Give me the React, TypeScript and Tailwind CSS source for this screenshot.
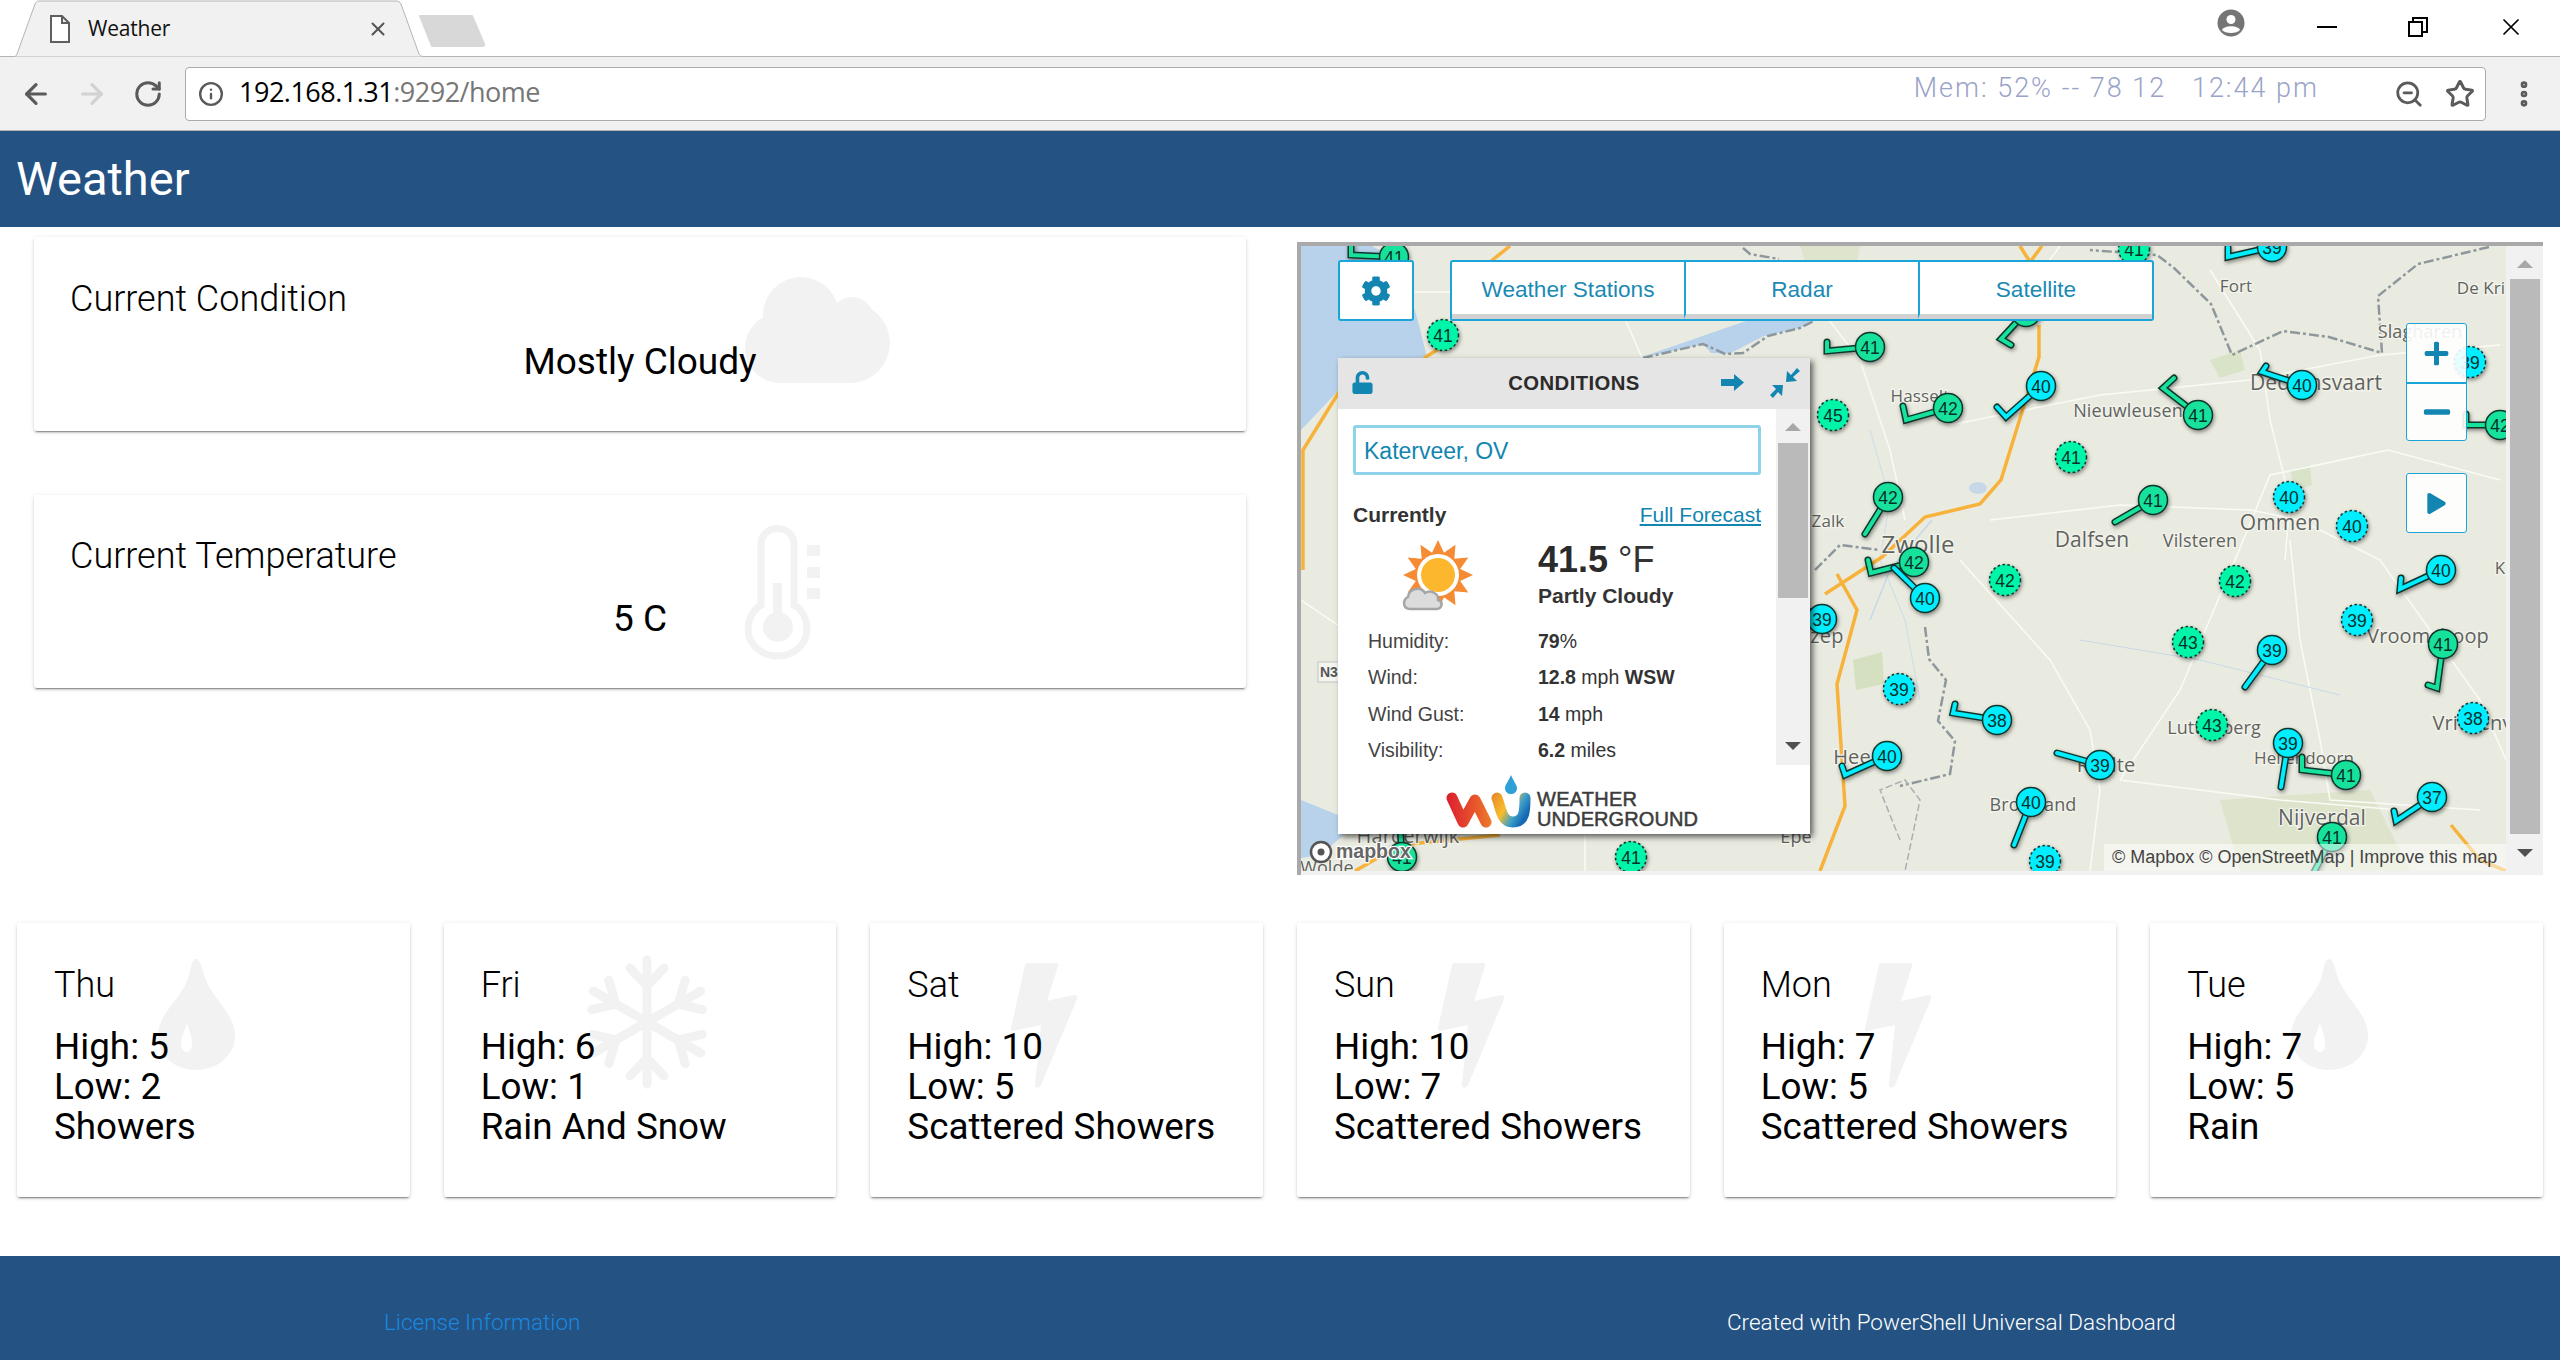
import {
  ArrowLeft,
  ArrowRight,
  Info,
  MoreVertical,
  RotateCw,
  Star,
  X,
  ZoomOut,
} from 'lucide-react'
import { FaCog, FaMinus, FaPlay, FaPlus, FaUnlock } from 'react-icons/fa'

// Station markers in page coordinates: [value, x, y, tail points]
type Marker = { v: number; x: number; y: number; tail?: number[][] }

const MARKERS: Marker[] = [
  { v: 41, x: 1394, y: 257, tail: [[1351, 255], [1351, 246]] },
  { v: 41, x: 1443, y: 335 },
  { v: 41, x: 1870, y: 347, tail: [[1827, 351], [1827, 342]] },
  { v: 45, x: 1833, y: 415 },
  { v: 42, x: 1888, y: 497, tail: [[1865, 534]] },
  { v: 39, x: 1822, y: 619, tail: [[1790, 600]] },
  { v: 39, x: 1899, y: 689 },
  { v: 40, x: 1887, y: 756, tail: [[1845, 775], [1842, 766]] },
  { v: 41, x: 1631, y: 857 },
  { v: 41, x: 1402, y: 857, tail: [[1400, 825]] },
  { v: 42, x: 1914, y: 562, tail: [[1871, 573], [1868, 560]] },
  { v: 40, x: 1925, y: 598, tail: [[1894, 568]] },
  { v: 40, x: 2041, y: 386, tail: [[2006, 417], [1997, 407]] },
  { v: 42, x: 1948, y: 408, tail: [[1906, 420], [1903, 406]] },
  { v: 41, x: 2198, y: 415, tail: [[2163, 388], [2174, 378]] },
  { v: 41, x: 2071, y: 457 },
  { v: 40, x: 2302, y: 385, tail: [[2262, 372], [2266, 366]] },
  { v: 39, x: 2470, y: 362 },
  { v: 42, x: 2500, y: 425, tail: [[2466, 425], [2466, 414]] },
  { v: 41, x: 2153, y: 500, tail: [[2115, 522]] },
  { v: 40, x: 2289, y: 497 },
  { v: 40, x: 2352, y: 526 },
  { v: 40, x: 2441, y: 570, tail: [[2400, 589], [2401, 578]] },
  { v: 42, x: 2005, y: 580 },
  { v: 42, x: 2235, y: 581 },
  { v: 39, x: 2357, y: 620 },
  { v: 43, x: 2188, y: 642 },
  { v: 39, x: 2272, y: 650, tail: [[2245, 687]] },
  { v: 41, x: 2443, y: 644, tail: [[2437, 688], [2428, 685]] },
  { v: 38, x: 2473, y: 718 },
  { v: 38, x: 1997, y: 720, tail: [[1953, 713], [1955, 704]] },
  { v: 43, x: 2212, y: 725 },
  { v: 39, x: 2100, y: 765, tail: [[2057, 753]] },
  { v: 39, x: 2288, y: 743, tail: [[2281, 787]] },
  { v: 41, x: 2346, y: 775, tail: [[2302, 770], [2302, 757]] },
  { v: 37, x: 2432, y: 797, tail: [[2396, 821], [2394, 811]] },
  { v: 40, x: 2031, y: 802, tail: [[2014, 845]] },
  { v: 39, x: 2045, y: 861 },
  { v: 41, x: 2332, y: 837, tail: [[2310, 880]] },
  { v: 41, x: 2134, y: 249 },
  { v: 39, x: 2272, y: 247, tail: [[2228, 257], [2228, 247]] },
  { v: 41, x: 2026, y: 312, tail: [[2001, 339], [2011, 345]] },
]

const LABELS: [string, number, number, number][] = [
  ['Fort', 2236, 292, 17],
  ['De Kri', 2481, 294, 17],
  ['Slagharen', 2420, 338, 18],
  ['Dedemsvaart', 2316, 390, 21],
  ['Hasselt', 1920, 402, 17],
  ['Nieuwleusen', 2128, 417, 18],
  ['Dalfsen', 2092, 547, 21],
  ['Vilsteren', 2200, 547, 18],
  ['Ommen', 2280, 530, 21],
  ['Zwolle', 1918, 553, 24],
  ['Vroomshoop', 2428, 643, 20],
  ['Vriezenveen', 2490, 730, 20],
  ['Luttenberg', 2214, 734, 18],
  ['Hellendoorn', 2304, 764, 17],
  ['Raalte', 2106, 772, 20],
  ['Broekland', 2033, 811, 18],
  ['Nijverdal', 2322, 825, 21],
  ['K', 2500, 574, 17],
  ['Zalk', 1828, 527, 17],
  ['Wezep', 1812, 643, 20],
  ['Heerde', 1868, 764, 20],
  ['Epe', 1796, 843, 18],
  ['Harderwijk', 1408, 843, 20],
  ['Wolde', 1327, 874, 18],
]

const WHITE_ROADS = [
  '2500,480 2388,450 2270,475 2235,560 2180,690 2120,780',
  '1950,425 2100,395 2250,380 2380,355 2500,345',
  '1990,520 2120,505 2250,510 2300,520 2380,560 2480,700 2506,760',
  '2210,270 2260,350 2270,420 2290,500 2285,560',
  '1960,560 2050,660 2090,730 2100,790 2090,871',
  '2290,540 2300,640 2320,740 2330,800 2480,810',
  '2120,780 2280,800 2400,810',
  '1905,520 1890,450 1860,360 1790,270',
  '1420,700 1360,640 1301,600',
  '1585,871 1585,835',
  '1626,321 1642,358',
  '1415,292 1452,292',
  '2060,246 2020,300',
]

const DAYS = [
  { day: 'Thu', high: 5, low: 2, text: 'Showers', icon: 'drop' },
  { day: 'Fri', high: 6, low: 1, text: 'Rain And Snow', icon: 'snow' },
  { day: 'Sat', high: 10, low: 5, text: 'Scattered Showers', icon: 'bolt' },
  { day: 'Sun', high: 10, low: 7, text: 'Scattered Showers', icon: 'bolt' },
  { day: 'Mon', high: 7, low: 5, text: 'Scattered Showers', icon: 'bolt' },
  { day: 'Tue', high: 7, low: 5, text: 'Rain', icon: 'drop' },
]

const cardCls =
  'relative rounded-[3px] bg-white shadow-[0_2px_2px_0_rgba(0,0,0,0.14),0_3px_1px_-2px_rgba(0,0,0,0.3),0_1px_5px_0_rgba(0,0,0,0.12)]'

function DropIcon() {
  return (
    <svg viewBox="0 0 77 111" className="absolute left-[141px] top-[36px] h-[111px] w-[77px]" aria-hidden>
      <path
        fillRule="evenodd"
        fill="#f2f2f2"
        d="M38 0 C42 0 44 8 46 16 C52 38 77 54 77 76 C77 96 60 111 38 111 C16 111 0 96 0 76 C0 54 26 38 31 16 C33 8 34 0 38 0 Z M29 64 C26 74 23 78 23 84 C23 91 27 93 29 93 C32 93 34 90 34 84 C34 78 32 74 29 64 Z"
      />
    </svg>
  )
}

function BoltIcon() {
  return (
    <svg viewBox="0 0 67 125" className="absolute left-[141px] top-[40px] h-[125px] w-[67px]" aria-hidden>
      <path
        fill="#f2f2f2"
        d="M17 0 H45 C47 0 48 1 47 3 L36 38 L63 32 C66 32 67 33 66 36 L30 122 C28 126 23 125 24 121 L30 62 L2 68 C0 68 0 67 0 65 L14 2 C14 1 15 0 17 0 Z"
      />
    </svg>
  )
}

function SnowIcon() {
  return (
    <svg viewBox="-62 -70 124 140" className="absolute left-[141px] top-[29px] h-[140px] w-[124px]" aria-hidden>
      {[0, 60, 120, 180, 240, 300].map((deg) => (
        <g key={deg} transform={`rotate(${deg})`} stroke="#f2f2f2" strokeWidth="9" strokeLinecap="round" fill="none">
          <path d="M0 0 V-62 M0 -36 L-17 -54 M0 -36 L17 -54" />
        </g>
      ))}
    </svg>
  )
}

function CloudIcon() {
  return (
    <svg viewBox="0 0 145 106" className="absolute left-[711px] top-[40px] h-[106px] w-[145px]" aria-hidden>
      <g fill="#f2f2f2">
        <circle cx="56" cy="38" r="38" />
        <circle cx="107" cy="42" r="22" />
        <circle cx="35" cy="71" r="35" />
        <circle cx="105" cy="66" r="40" />
        <rect x="30" y="60" width="80" height="46" />
      </g>
    </svg>
  )
}

function ThermometerIcon() {
  return (
    <svg viewBox="0 0 77 135" className="absolute left-[711px] top-[30px] h-[135px] w-[77px]" aria-hidden>
      <g fill="none" stroke="#f2f2f2" strokeWidth="7">
        <path d="M16 80 V20 C16 -2 49 -2 49 20 V80 C60 86 62 98 62 104 C62 118 50 131 33 131 C15 131 3 118 3 104 C3 98 6 86 16 80 Z" />
      </g>
      <rect x="28" y="58" width="9" height="40" fill="#f2f2f2" />
      <circle cx="33" cy="102" r="15" fill="#f2f2f2" />
      <g fill="#f2f2f2">
        <rect x="62" y="20" width="13" height="11" />
        <rect x="62" y="42" width="13" height="11" />
        <rect x="62" y="63" width="13" height="11" />
      </g>
    </svg>
  )
}

function StationMarker({ v, x, y, tail }: Marker) {
  const fill = v < 41 ? '#00eeff' : tail ? '#14e29c' : '#00f5a8'
  const pts = tail ? [`${x},${y}`, ...tail.map((p) => p.join(','))].join(' ') : ''
  return (
    <g>
      {tail ? (
        <g filter="url(#marker-shadow)">
          <polyline points={pts} fill="none" stroke="#10342c" strokeWidth="7" strokeLinejoin="miter" strokeLinecap="round" />
          <polyline points={pts} fill="none" stroke={fill} strokeWidth="4" strokeLinejoin="miter" strokeLinecap="round" />
          <circle cx={x} cy={y} r="14.5" fill={fill} stroke="#10342c" strokeWidth="1.5" />
        </g>
      ) : (
        <circle cx={x} cy={y} r="15.5" fill={fill} stroke="#10342c" strokeWidth="1.5" strokeDasharray="2.5 2.5" filter="url(#marker-shadow)" />
      )}
      <text x={x} y={y + 6.5} textAnchor="middle" fontSize="17.5" fill="#06302a" fontFamily="'Liberation Sans', sans-serif">
        {v}
      </text>
    </g>
  )
}

function MapCanvas() {
  return (
    <svg viewBox="1301 246 1205 625" className="h-[625px] w-[1205px] shrink-0 bg-[#eaebe0]" aria-hidden>
      <defs>
        <filter id="marker-shadow" x="-50%" y="-50%" width="200%" height="200%">
          <feDropShadow dx="1" dy="2" stdDeviation="2" floodColor="#000" floodOpacity="0.45" />
        </filter>
      </defs>

      {/* water */}
      <polygon fill="#b7d2ea" points="1301,246 1372,246 1400,262 1418,321 1427,357 1339,390 1301,430" />
      <polygon fill="#b7d2ea" points="1639,358 1746,321 1814,321 1800,328 1764,336 1729,354 1711,353 1703,344 1664,353" />
      <polygon fill="#b7d2ea" points="1301,800 1338,815 1345,834 1320,855 1301,858" />
      <polygon fill="#dfe5cd" points="1800,246 1860,246 1850,300 1815,290" />
      <polygon fill="#dde4cb" points="2220,800 2370,790 2410,871 2240,871" />
      <polygon fill="#d5e0c0" points="1853,660 1882,652 1884,684 1856,690" />
      <polygon fill="#d9e3c8" points="2210,360 2240,350 2245,370 2220,378" />
      <polygon fill="#d9e3c8" points="2290,470 2310,465 2312,485 2295,490" />

      {/* thin roads and rivers */}
      {WHITE_ROADS.map((p) => (
        <polyline key={p} points={p} fill="none" stroke="#fbfbf6" strokeWidth="1.5" />
      ))}
      <polyline points="1870,430 1890,500 1880,560 1905,620 1920,700" fill="none" stroke="#cfdfe8" strokeWidth="1.2" />
      <polyline points="2080,640 2200,660 2340,695" fill="none" stroke="#c6d8e8" strokeWidth="1" />
      <polyline points="1932,520 1890,570 1870,620" fill="none" stroke="#c6d8e8" strokeWidth="1.5" />
      <ellipse cx="1978" cy="488" rx="9" ry="6" fill="#c6d8e8" />

      {/* motorways */}
      <g fill="none" stroke="#f7b23b" strokeWidth="3.5">
        <polyline points="1303,570 1303,450 1339,392" />
        <polyline points="1424,358 1450,342" />
        <polyline points="1825,594 1882,557 1925,517 1980,504 2001,480 2039,357 2039,325" />
        <polyline points="1837,574 1857,610 1837,684 1845,806 1820,871" />
        <polyline points="1355,871 1400,845 1500,835" />
        <polyline points="2451,825 2480,860 2506,871" />
        <polyline points="1510,246 1490,262" />
        <polyline points="2020,246 2030,262 2042,246" />
      </g>

      {/* province border */}
      <g fill="none" stroke="#8d979c" strokeWidth="2.5" strokeDasharray="10 3 3 3">
        <polyline points="2489,247 2418,264 2378,296 2382,353 2329,337 2283,331 2232,355 2211,304 2174,268 2157,255 2090,250" />
        <polyline points="1643,358 1703,344 1725,354 1743,353 1768,336 1800,328 1814,321" />
        <polyline points="1743,248 1750,254 1779,259" />
        <polyline points="1925,627 1929,659 1946,680 1938,721 1955,741 1950,774 1900,786" />
        <polyline points="1815,570 1840,545 1880,550" />
      </g>
      <polyline points="1900,840 1880,790 1905,780 1920,800 1905,871" fill="none" stroke="#a9b0b2" strokeWidth="1.5" strokeDasharray="7 3" />

      {/* road shield */}
      <rect x="1318" y="662" width="24" height="20" fill="#f4f4f0" stroke="#c4c4c0" />
      <text x="1320" y="677" fontSize="14" fontWeight="700" fill="#555" fontFamily="'Liberation Sans', sans-serif">
        N3
      </text>

      {LABELS.map(([t, x, y, s]) => (
        <text
          key={t}
          x={x}
          y={y}
          textAnchor="middle"
          fontSize={s}
          fill="#5f6360"
          stroke="#f3f3ec"
          strokeWidth="2.5"
          paintOrder="stroke"
          letterSpacing="0.1"
          fontFamily="'Open Sans', sans-serif"
        >
          {t}
        </text>
      ))}

      {MARKERS.map((m) => (
        <StationMarker key={`${m.x}-${m.y}`} {...m} />
      ))}

      {/* mapbox mark */}
      <circle cx="1321" cy="852" r="10" fill="#fff" stroke="#555" strokeWidth="2.5" />
      <circle cx="1321" cy="852" r="3.5" fill="#555" />
      <text
        x="1336"
        y="858"
        fontSize="19.5"
        fontWeight="700"
        fill="#666"
        stroke="#fff"
        strokeWidth="2.5"
        paintOrder="stroke"
        fontFamily="'Liberation Sans', sans-serif"
      >
        mapbox
      </text>
    </svg>
  )
}

function SunCloudIcon() {
  const pts: string[] = []
  for (let i = 0; i < 24; i++) {
    const r = i % 2 === 0 ? 35 : 23
    const a = (i * Math.PI) / 12 - Math.PI / 2
    pts.push(`${(36 + r * Math.cos(a)).toFixed(1)},${(35 + r * Math.sin(a)).toFixed(1)}`)
  }
  return (
    <svg viewBox="0 0 72 72" className="ml-[64px] h-[72px] w-[72px] shrink-0" aria-hidden>
      <polygon points={pts.join(' ')} fill="#f58b32" />
      <circle cx="36" cy="35" r="21" fill="#fff" />
      <circle cx="36" cy="35" r="17" fill="#fdb72e" />
      <path
        d="M8 69 C1 69 0 60 6 57 C7 48 19 46 23 53 C29 49 37 54 36 60 C42 62 40 69 34 69 Z"
        fill="#dcdcdc"
        stroke="#a5a5a5"
        strokeWidth="2.5"
      />
    </svg>
  )
}

function WuLogo() {
  return (
    <svg viewBox="0 0 254 60" className="h-[60px] w-[254px]" aria-hidden>
      <defs>
        <linearGradient id="wu-w" gradientUnits="userSpaceOnUse" x1="2" x2="56" y1="0" y2="0">
          <stop offset="0" stopColor="#dc1f2e" />
          <stop offset="0.55" stopColor="#e8592b" />
          <stop offset="1" stopColor="#f0932c" />
        </linearGradient>
        <linearGradient id="wu-u" gradientUnits="userSpaceOnUse" x1="50" x2="84" y1="20" y2="40">
          <stop offset="0" stopColor="#e88a2c" />
          <stop offset="0.45" stopColor="#f7bd2c" />
          <stop offset="0.75" stopColor="#3e9fc8" />
          <stop offset="1" stopColor="#1468b4" />
        </linearGradient>
      </defs>
      <polyline points="7,28 18,52 30,30 41,52" fill="none" stroke="url(#wu-w)" strokeWidth="11" strokeLinejoin="round" strokeLinecap="round" />
      <path d="M52 28 C56 38 56 52 68 52 C80 52 80 40 80 28" fill="none" stroke="url(#wu-u)" strokeWidth="11" strokeLinecap="round" />
      <path d="M66 5 C69 12 72 15 72 18 C72 22 69 24 66 24 C63 24 60 22 60 18 C60 15 63 12 66 5 Z" fill="#2f9fd8" />
      <text
        x="92"
        y="36"
        fontSize="20"
        fill="#3c3c3c"
        stroke="#3c3c3c"
        strokeWidth="0.5"
        fontFamily="'Liberation Sans', sans-serif"
        textLength="100"
      >
        WEATHER
      </text>
      <text
        x="92"
        y="56"
        fontSize="20"
        fill="#3c3c3c"
        stroke="#3c3c3c"
        strokeWidth="0.5"
        fontFamily="'Liberation Sans', sans-serif"
        textLength="161"
      >
        UNDERGROUND
      </text>
    </svg>
  )
}

function ConditionsPanel() {
  const rows: [string, string, string?, string?][] = [
    ['Humidity:', '79', '%'],
    ['Wind:', '12.8', ' mph ', 'WSW'],
    ['Wind Gust:', '14', ' mph'],
    ['Visibility:', '6.2', ' miles'],
  ]
  return (
    <div className="absolute left-[37px] top-[112px] flex h-[476px] w-[472px] flex-col bg-white font-['Liberation_Sans',sans-serif] text-[#333] shadow-[3px_3px_6px_rgba(0,0,0,0.6)]">
      <div className="relative flex h-[51px] shrink-0 items-center justify-center bg-[#e5e5e5] text-[20.3px] font-bold tracking-[0.4px] text-[#2b2b2b]">
        <FaUnlock className="absolute left-[14px] top-[13px] h-[23px] w-[21px] text-[#1285b0]" />
        CONDITIONS
        <svg viewBox="0 0 23 17" className="absolute left-[383px] top-[16px] h-[17px] w-[23px] text-[#1285b0]" aria-hidden>
          <path fill="currentColor" d="M0 5 H13 V0 L23 8.5 L13 17 V12 H0 Z" />
        </svg>
        <svg viewBox="0 0 30 30" className="absolute left-[432px] top-[10px] h-[30px] w-[30px] text-[#1285b0]" aria-hidden>
          <path fill="currentColor" d="M16 14 L17 3 L21 7 L27 0 L30 3 L23 9 L27 13 Z M13 17 L12 28 L8 24 L3 30 L0 27 L6 21 L2 17 Z" />
        </svg>
      </div>
      <div className="flex h-[356px] shrink-0">
        <div className="flex min-w-0 flex-1 flex-col overflow-hidden">
          <div className="mx-[15px] mt-[16px] flex h-[50px] shrink-0 items-center rounded-[3px] border-[3px] border-[#8fd2ea] pl-[8px] pt-[3px] text-[23px] text-[#1285b0]">
            Katerveer, OV
          </div>
          <div className="mx-[15px] mt-[28px] flex h-[24px] shrink-0 items-center justify-between text-[21px]">
            <span className="font-bold">Currently</span>
            <span className="text-[#1285b0] underline">Full Forecast</span>
          </div>
          <div className="mt-[13px] flex shrink-0">
            <div className="flex w-[151px] shrink-0">
              <SunCloudIcon />
            </div>
            <div className="ml-[49px]">
              <div className="flex h-[40px] items-center text-[36px] leading-[40px]">
                <span className="font-bold text-[#2b2b2b]">41.5</span>
                <span className="ml-[10px] text-[#333]">°F</span>
              </div>
              <div className="mt-[4px] text-[21px] font-bold leading-[24px]">Partly Cloudy</div>
            </div>
          </div>
          <div className="mt-[11px] shrink-0 text-[19.5px] leading-[36.4px]">
            {rows.map(([label, num, unit, dir]) => (
              <div key={label} className="flex pl-[30px]">
                <span className="w-[170px] shrink-0 text-[#444]">{label}</span>
                <span>
                  <b>{num}</b>
                  {unit}
                  {dir && <b>{dir}</b>}
                </span>
              </div>
            ))}
          </div>
        </div>
        <div className="flex w-[34px] shrink-0 flex-col items-center bg-[#f1f1f1] pt-[14px]">
          <div className="h-0 w-0 border-x-[8px] border-b-[8px] border-x-transparent border-b-[#a8a8a8]" />
          <div className="mt-[12px] h-[155px] w-[30px] bg-[#bababa]" />
          <div className="mt-[144px] h-0 w-0 border-x-[8px] border-t-[8px] border-x-transparent border-t-[#505050]" />
        </div>
      </div>
      <div className="flex flex-1 items-start pl-[107px] pt-[5px]">
        <WuLogo />
      </div>
    </div>
  )
}

function WeatherMap() {
  return (
    <div className="relative flex h-[633px] w-full items-start overflow-hidden border-l-4 border-t-4 border-[#a9a9a9] bg-[#f1f1f1]">
      <MapCanvas />
      <div className="flex flex-1 flex-col items-center pt-[14px]">
        <div className="h-0 w-0 border-x-[8px] border-b-[8px] border-x-transparent border-b-[#a8a8a8]" />
        <div className="mt-[11px] h-[555px] w-[30px] bg-[#bababa]" />
        <div className="mt-[15px] h-0 w-0 border-x-[8px] border-t-[8px] border-x-transparent border-t-[#505050]" />
      </div>

      <div className="absolute left-[37px] top-[14px] flex h-[61px] w-[76px] items-center justify-center rounded-[3px] border-2 border-[#1aa5d8] bg-white">
        <FaCog className="h-[30px] w-[30px] text-[#1285b0]" />
      </div>
      <div className="absolute left-[149px] top-[14px] flex h-[61px] w-[704px] overflow-hidden rounded-[3px] border-2 border-[#1aa5d8] bg-white font-['Liberation_Sans',sans-serif] text-[22.6px] text-[#1a8ab5]">
        {['Weather Stations', 'Radar', 'Satellite'].map((t, i) => (
          <div
            key={t}
            className={`flex flex-1 items-center justify-center border-b-[5px] border-b-[#d2d2d2] pt-[3px] ${i > 0 ? 'border-l-2 border-l-[#1aa5d8]' : ''}`}
          >
            {t}
          </div>
        ))}
      </div>
      <ConditionsPanel />
      <div className="absolute left-[1105px] top-[77px] flex h-[118px] w-[61px] flex-col overflow-hidden rounded-[3px] border border-[#1aa5d8] bg-white/90 text-[#1285b0]">
        <div className="flex h-[60px] items-center justify-center border-b-2 border-[#1aa5d8]">
          <FaPlus className="h-[27px] w-[27px]" />
        </div>
        <div className="flex flex-1 items-center justify-center">
          <FaMinus className="h-[30px] w-[30px]" />
        </div>
      </div>
      <div className="absolute left-[1105px] top-[227px] flex h-[60px] w-[61px] items-center justify-center rounded-[3px] border border-[#1aa5d8] bg-white/90 text-[#1285b0]">
        <FaPlay className="h-[21px] w-[21px]" />
      </div>
      <div className="absolute left-[803px] top-[598px] flex h-[27px] w-[402px] items-center bg-white/50 pl-[8px] font-['Liberation_Sans',sans-serif] text-[18px] whitespace-nowrap text-[#444]">
        © Mapbox © OpenStreetMap | Improve this map
      </div>
    </div>
  )
}

function BrowserChrome() {
  return (
    <div className="font-['Open_Sans',sans-serif]">
      <div className="relative flex h-[57px] border-b border-[#b4b4b4] bg-white">
        <div className="relative ml-[11px] flex h-[57px] w-[414px] items-center">
          <svg viewBox="0 0 414 57" className="absolute inset-0 h-[57px] w-[414px]" aria-hidden>
            <path d="M0 57 H2 C4 57 5 56 6 54 L24 4 C25 2 26 1 28 1 H385 C387 1 389 2 390 4 L408 54 C409 56 410 56 414 57 Z" fill="#f1f1f1" stroke="#b4b4b4" />
          </svg>
          <svg viewBox="0 0 20 28" className="relative ml-[39px] h-[28px] w-[20px]" aria-hidden>
            <path d="M1 1 H12 L19 8 V27 H1 Z M12 1 V8 H19" fill="#fff" stroke="#5f5f5f" strokeWidth="2" />
          </svg>
          <span className="relative ml-[18px] text-[21px] tracking-[-0.2px] text-[#111]">Weather</span>
          <X className="absolute left-[356px] top-[18px] h-[22px] w-[22px] text-[#555]" strokeWidth={2.2} />
        </div>
        <svg viewBox="0 0 68 34" className="-ml-[7px] mt-[14px] h-[34px] w-[68px]" aria-hidden>
          <path d="M2 2 H54 L66 30 C67 32 66 32 64 32 H14 Z" fill="#d8d8d8" stroke="#d8d8d8" strokeWidth="2" strokeLinejoin="round" />
        </svg>
        <div className="ml-auto flex items-start">
          <svg viewBox="0 0 28 28" className="mr-[72px] mt-[9px] h-[28px] w-[28px]" aria-hidden>
            <circle cx="14" cy="14" r="13.5" fill="#757575" />
            <circle cx="14" cy="10.5" r="4.5" fill="#fff" />
            <path d="M5 21 C7 16 21 16 23 21 C20 25 8 25 5 21 Z" fill="#fff" />
          </svg>
          <div className="mr-[71px] mt-[26px] h-[2px] w-[20px] bg-black" />
          <svg viewBox="0 0 20 20" className="mr-[69px] mt-[17px] h-[20px] w-[20px]" aria-hidden>
            <path d="M1 5 H14 V19 H1 Z M5 5 V1 H19 V15 H14" fill="none" stroke="#000" strokeWidth="2" />
          </svg>
          <X className="mr-[35px] mt-[13px] h-[28px] w-[28px] text-black" strokeWidth={1.5} />
        </div>
      </div>
      <div className="flex h-[74px] items-center border-b border-[#b4b4b4] bg-[#f1f1f1]">
        <ArrowLeft className="ml-[20px] h-[32px] w-[32px] text-[#5a5a5a]" strokeWidth={2.4} />
        <ArrowRight className="ml-[24px] h-[32px] w-[32px] text-[#d2d2d2]" strokeWidth={2.4} />
        <RotateCw className="ml-[25px] h-[30px] w-[30px] text-[#5a5a5a]" strokeWidth={2.4} />
        <div className="ml-[22px] flex h-[54px] w-[2301px] items-center rounded-[4px] border border-[#ababab] bg-white">
          <Info className="ml-[12px] h-[26px] w-[26px] text-[#5a5a5a]" strokeWidth={2.2} />
          <span className="mb-[2px] ml-[15px] text-[27px] tracking-[-0.5px] text-black">
            192.168.1.31<span className="text-[#767676]">:9292/home</span>
          </span>
          <span className="mb-[10px] ml-auto font-['Roboto',sans-serif] text-[27px] font-light tracking-[2px] whitespace-pre text-[#9aa3c8]">
            Mem: 52% -- 78 12   12:44 pm
          </span>
          <ZoomOut className="ml-[75px] h-[30px] w-[30px] text-[#5a5a5a]" strokeWidth={2.2} />
          <Star className="ml-[21px] mr-[10px] h-[30px] w-[30px] text-[#5a5a5a]" strokeWidth={2.4} />
        </div>
        <MoreVertical className="ml-[22px] h-[32px] w-[32px] text-[#5a5a5a]" strokeWidth={3} />
      </div>
    </div>
  )
}

export default function App() {
  return (
    <div className="flex h-[1360px] w-full flex-col overflow-hidden bg-white font-['Roboto',sans-serif] text-black">
      <BrowserChrome />
      <header className="flex h-[96px] shrink-0 items-center bg-[#245283] pl-[16px] text-[47px] text-white">Weather</header>

      <div className="flex shrink-0">
        <div className="flex w-1/2 flex-col gap-[64px] px-[34px] pt-[10px]">
          <div className={`${cardCls} h-[194px] px-[36px] pt-[38px]`}>
            <CloudIcon />
            <div className="relative text-[36px] leading-[48px] font-light">Current Condition</div>
            <div className="relative mt-[15px] text-center text-[37px] leading-[48px]">Mostly Cloudy</div>
          </div>
          <div className={`${cardCls} h-[193px] px-[36px] pt-[37px]`}>
            <ThermometerIcon />
            <div className="relative text-[36px] leading-[48px] font-light">Current Temperature</div>
            <div className="relative mt-[15px] text-center text-[37px] leading-[48px]">5 C</div>
          </div>
        </div>
        <div className="w-1/2 px-[17px] pt-[15px]">
          <WeatherMap />
        </div>
      </div>

      <div className="mt-[48px] grid shrink-0 grid-cols-6">
        {DAYS.map((d) => (
          <div key={d.day} className="px-[17px]">
            <div className={`${cardCls} h-[274px] px-[37px] pt-[38px]`}>
              {d.icon === 'drop' && <DropIcon />}
              {d.icon === 'bolt' && <BoltIcon />}
              {d.icon === 'snow' && <SnowIcon />}
              <div className="relative text-[36px] leading-[48px] font-light">{d.day}</div>
              <div className="relative mt-[18px] text-[36.8px] leading-[40px]">
                <div>High: {d.high}</div>
                <div>Low: {d.low}</div>
                <div>{d.text}</div>
              </div>
            </div>
          </div>
        ))}
      </div>

      <footer className="mt-[59px] flex flex-1 items-center bg-[#245283] pt-[30px] text-[22.5px] font-light">
        <div className="w-[1280px] shrink-0 pl-[384px] text-[#1a88e0]">License Information</div>
        <div className="pl-[447px] text-white">Created with PowerShell Universal Dashboard</div>
      </footer>
    </div>
  )
}
